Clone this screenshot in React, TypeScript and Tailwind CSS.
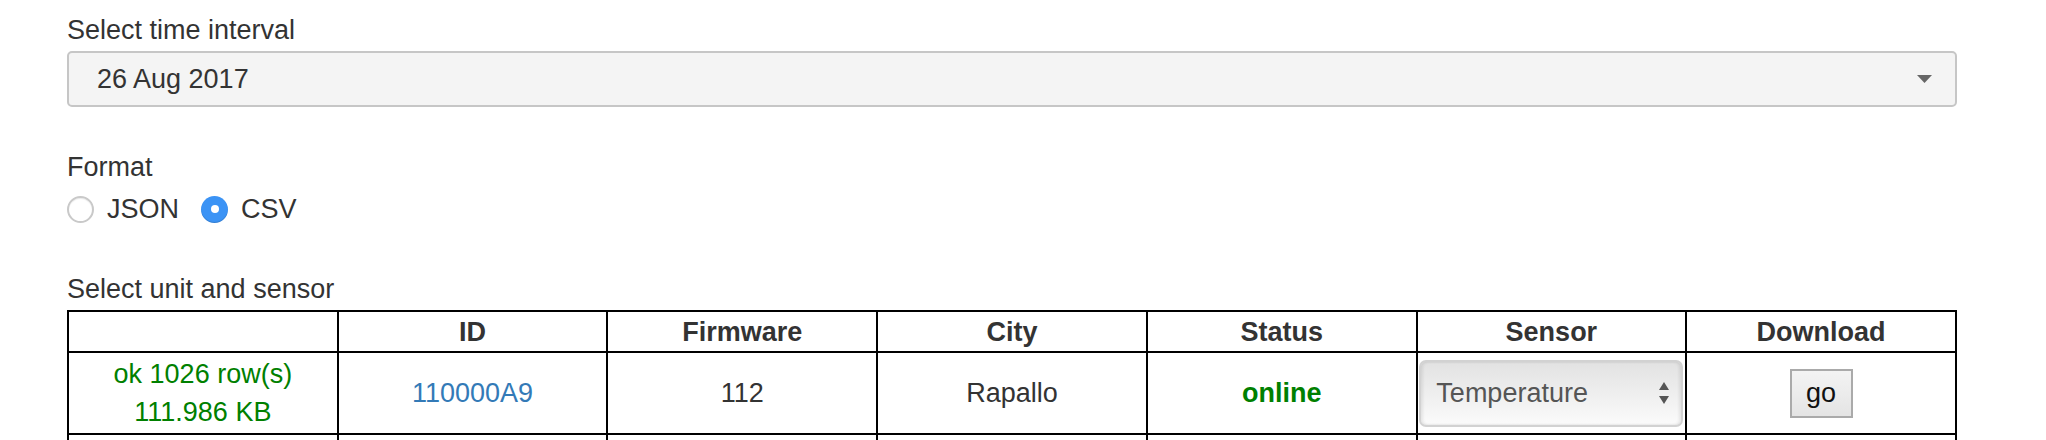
import { useState } from "react";

const font = "font-['Liberation_Sans','Helvetica_Neue',Arial,sans-serif]";

const headers = ["", "ID", "Firmware", "City", "Status", "Sensor", "Download"];

function Radio({ checked, label, onClick }: { checked: boolean; label: string; onClick: () => void }) {
  return (
    <label className="flex items-center cursor-pointer" onClick={onClick}>
      {checked ? (
        <span className="w-[27px] h-[27px] rounded-full bg-[#3b93f5] flex items-center justify-center shadow-[inset_0_-1px_1px_rgba(0,0,0,0.15)]">
          <span className="w-[8px] h-[8px] rounded-full bg-white" />
        </span>
      ) : (
        <span className="w-[27px] h-[27px] rounded-full border-2 border-[#c9c9c9] bg-white shadow-[inset_0_1px_1px_rgba(0,0,0,0.08)]" />
      )}
      <span className="ml-[13px]">{label}</span>
    </label>
  );
}

function SensorSelect({ label }: { label?: string }) {
  return (
    <div className="mx-auto w-[264px] h-[67px] rounded-[7px] border-2 border-[#d2d2d2] bg-gradient-to-b from-[#e2e2e2] to-[#fbfbfb] shadow-[inset_2px_0_3px_rgba(0,0,0,0.08),inset_-2px_0_3px_rgba(0,0,0,0.08)] flex items-center justify-between pl-[15px] pr-[12px] text-[#555]">
      <span>{label}</span>
      <svg width="10" height="23" viewBox="0 0 10 23">
        <path d="M5 0 L10 8 H0 Z" fill="#555" />
        <path d="M0 14 H10 L5 22 Z" fill="#555" />
      </svg>
    </div>
  );
}

export default function App() {
  const [format, setFormat] = useState("CSV");

  return (
    <div className={`${font} text-[27px] leading-[38px] text-[#333] bg-white min-h-[440px]`}>
      <div className="ml-[67px] w-[1890px] pt-[11px]">
        <div>Select time interval</div>
        <div className="mt-[2px] h-[56px] border-2 border-[#c6c6c6] rounded-[5px] bg-[#f4f4f4] flex items-center justify-between pl-[28px] pr-[23px]">
          <span>26 Aug 2017</span>
          <svg width="15" height="8" viewBox="0 0 15 8">
            <path d="M0 0 H15 L7.5 8 Z" fill="#666" />
          </svg>
        </div>

        <div className="mt-[41px]">Format</div>
        <div className="mt-[4px] flex items-center gap-[22px]">
          <Radio checked={format === "JSON"} label="JSON" onClick={() => setFormat("JSON")} />
          <Radio checked={format === "CSV"} label="CSV" onClick={() => setFormat("CSV")} />
        </div>

        <div className="mt-[42px]">Select unit and sensor</div>
        <table className="mt-[2px] w-full table-fixed border-collapse border-2 border-black">
          <thead>
            <tr>
              {headers.map((h, i) => (
                <th key={i} className="h-[41px] border-2 border-black font-bold text-center align-middle p-0 text-[#333]">
                  {h}
                </th>
              ))}
            </tr>
          </thead>
          <tbody>
            <tr className="text-center">
              <td className="h-[82px] border-2 border-black text-[#008000] p-0 align-middle">
                <div>ok 1026 row(s)</div>
                <div>111.986 KB</div>
              </td>
              <td className="border-2 border-black text-[#337ab7] p-0">110000A9</td>
              <td className="border-2 border-black p-0">112</td>
              <td className="border-2 border-black p-0">Rapallo</td>
              <td className="border-2 border-black p-0 font-bold text-[#008000]">online</td>
              <td className="border-2 border-black p-0">
                <SensorSelect label="Temperature" />
              </td>
              <td className="border-2 border-black p-0">
                <button className="w-[63px] h-[49px] border-2 border-[#aaa] bg-gradient-to-b from-[#f3f3f3] via-[#ececec] to-[#e4e4e4] text-[#111] leading-none">
                  go
                </button>
              </td>
            </tr>
            {/* next unit row, only its top edge falls inside the frame */}
            <tr>
              <td className="h-[82px] border-2 border-black p-0" />
              <td className="border-2 border-black p-0" />
              <td className="border-2 border-black p-0" />
              <td className="border-2 border-black p-0" />
              <td className="border-2 border-black p-0" />
              <td className="border-2 border-black p-0">
                <SensorSelect />
              </td>
              <td className="border-2 border-black p-0" />
            </tr>
          </tbody>
        </table>
      </div>
    </div>
  );
}
